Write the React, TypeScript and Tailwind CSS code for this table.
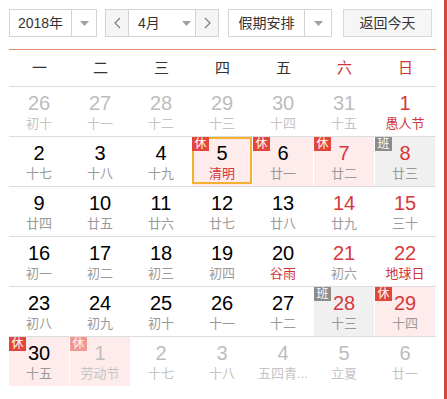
import React from "react";

type Day = {
  n: number;
  lunar: string;
  other?: boolean;
  red?: boolean;
  lunarRed?: boolean;
  tag?: "休" | "班";
  today?: boolean;
};

const weeks: Day[][] = [
  [
    { n: 26, lunar: "初十", other: true },
    { n: 27, lunar: "十一", other: true },
    { n: 28, lunar: "十二", other: true },
    { n: 29, lunar: "十三", other: true },
    { n: 30, lunar: "十四", other: true },
    { n: 31, lunar: "十五", other: true },
    { n: 1, lunar: "愚人节", red: true, lunarRed: true },
  ],
  [
    { n: 2, lunar: "十七" },
    { n: 3, lunar: "十八" },
    { n: 4, lunar: "十九" },
    { n: 5, lunar: "清明", lunarRed: true, tag: "休", today: true },
    { n: 6, lunar: "廿一", tag: "休" },
    { n: 7, lunar: "廿二", red: true, tag: "休" },
    { n: 8, lunar: "廿三", red: true, tag: "班" },
  ],
  [
    { n: 9, lunar: "廿四" },
    { n: 10, lunar: "廿五" },
    { n: 11, lunar: "廿六" },
    { n: 12, lunar: "廿七" },
    { n: 13, lunar: "廿八" },
    { n: 14, lunar: "廿九", red: true },
    { n: 15, lunar: "三十", red: true },
  ],
  [
    { n: 16, lunar: "初一" },
    { n: 17, lunar: "初二" },
    { n: 18, lunar: "初三" },
    { n: 19, lunar: "初四" },
    { n: 20, lunar: "谷雨", lunarRed: true },
    { n: 21, lunar: "初六", red: true },
    { n: 22, lunar: "地球日", red: true, lunarRed: true },
  ],
  [
    { n: 23, lunar: "初八" },
    { n: 24, lunar: "初九" },
    { n: 25, lunar: "初十" },
    { n: 26, lunar: "十一" },
    { n: 27, lunar: "十二" },
    { n: 28, lunar: "十三", red: true, tag: "班" },
    { n: 29, lunar: "十四", red: true, tag: "休" },
  ],
  [
    { n: 30, lunar: "十五", tag: "休" },
    { n: 1, lunar: "劳动节", other: true, tag: "休" },
    { n: 2, lunar: "十七", other: true },
    { n: 3, lunar: "十八", other: true },
    { n: 4, lunar: "五四青...", other: true },
    { n: 5, lunar: "立夏", other: true },
    { n: 6, lunar: "廿一", other: true },
  ],
];

const Caret = () => (
  <svg width="9" height="5" viewBox="0 0 9 5">
    <path d="M0 0h9L4.5 5z" fill="#a0a0a0" />
  </svg>
);

const Chevron = ({ right }: { right?: boolean }) => (
  <svg width="7" height="12" viewBox="0 0 7 12">
    <path
      d={right ? "M1 1l5 5-5 5" : "M6 1L1 6l5 5"}
      fill="none"
      stroke="#777"
      strokeWidth="1.1"
    />
  </svg>
);

function Cell({ d }: { d: Day }) {
  let bg = "";
  if (d.tag === "休") bg = "bg-[#fdeceb]";
  if (d.tag === "班") bg = "bg-[#f0f0f0]";
  const numColor = d.other
    ? "text-[#bdbdbd]"
    : d.red
      ? "text-[#d8373a]"
      : "text-black";
  const lunarColor = d.other
    ? "text-[#c4c4c4]"
    : d.lunarRed
      ? "text-[#d0353a]"
      : "text-[#9a9a9a]";
  return (
    <div className={`relative mr-px h-[49px] pt-[5px] text-center ${bg}`}>
      {d.today && (
        <div className="absolute inset-0 bottom-[2px] border-2 border-[#f3b12f]" />
      )}
      {d.tag && (
        <div
          className={`absolute left-0 top-0 flex h-[14px] w-[17px] items-center justify-center text-[12px] leading-none text-white ${
            d.tag === "班" ? "bg-[#8c8c8c]" : "bg-[#e2463a]"
          } ${d.other ? "opacity-50" : ""}`}
        >
          {d.tag}
        </div>
      )}
      <div className={`relative text-[20px] leading-[22px] ${numColor}`}>
        {d.n}
      </div>
      <div className={`relative mt-[2px] text-[13px] leading-[16px] ${lunarColor}`}>
        {d.lunar}
      </div>
    </div>
  );
}

export default function App() {
  const heads = ["一", "二", "三", "四", "五", "六", "日"];
  return (
    <div
      className="flex h-[399px] w-[447px] overflow-hidden bg-white"
      style={{ fontFamily: '"Liberation Sans", "Noto Sans CJK SC", sans-serif' }}
    >
      <div className="w-[444px] pl-[9px] pt-[9px]">
        {/* toolbar */}
        <div className="flex h-[28px] text-[14px] text-[#333]">
          <div className="flex w-[88px] border border-[#d4d4d4]">
            <div className="flex w-[62px] items-center justify-center border-r border-[#d4d4d4]">
              2018年
            </div>
            <div className="flex flex-1 items-center justify-center">
              <Caret />
            </div>
          </div>
          <div className="ml-[8px] flex w-[114px] border border-[#d4d4d4]">
            <div className="flex w-[23px] items-center justify-center border-r border-[#d4d4d4] bg-[#f5f5f5]">
              <Chevron />
            </div>
            <div className="flex flex-1 items-center gap-[22px] pl-[9px]">
              <span>4月</span>
              <Caret />
            </div>
            <div className="flex w-[23px] items-center justify-center border-l border-[#d4d4d4] bg-[#f5f5f5]">
              <Chevron right />
            </div>
          </div>
          <div className="ml-[9px] flex w-[104px] border border-[#d4d4d4]">
            <div className="flex w-[76px] items-center justify-center border-r border-[#d4d4d4]">
              假期安排
            </div>
            <div className="flex flex-1 items-center justify-center">
              <Caret />
            </div>
          </div>
          <div className="ml-[11px] flex w-[89px] items-center justify-center border border-[#d9d9d9] bg-[#f6f6f6]">
            返回今天
          </div>
        </div>

        <div className="mt-[12px] h-px w-[427px] bg-[#e08a6a]" />

        {/* weekday header */}
        <div className="grid w-[427px] grid-cols-7 text-[15px] leading-[36px]">
          {heads.map((h, i) => (
            <div
              key={h}
              className={`text-center ${i >= 5 ? "text-[#d0353a]" : "text-[#333]"}`}
            >
              {h}
            </div>
          ))}
        </div>

        {/* day grid */}
        {weeks.map((w, i) => (
          <div
            key={i}
            className={`grid w-[427px] grid-cols-7 ${i < 5 ? "border-t" : "border-t"} border-[#dcdcdc]`}
          >
            {w.map((d, j) => (
              <Cell key={j} d={d} />
            ))}
          </div>
        ))}
      </div>
      <div className="w-[3px] bg-[#cf4a3a]" />
    </div>
  );
}
